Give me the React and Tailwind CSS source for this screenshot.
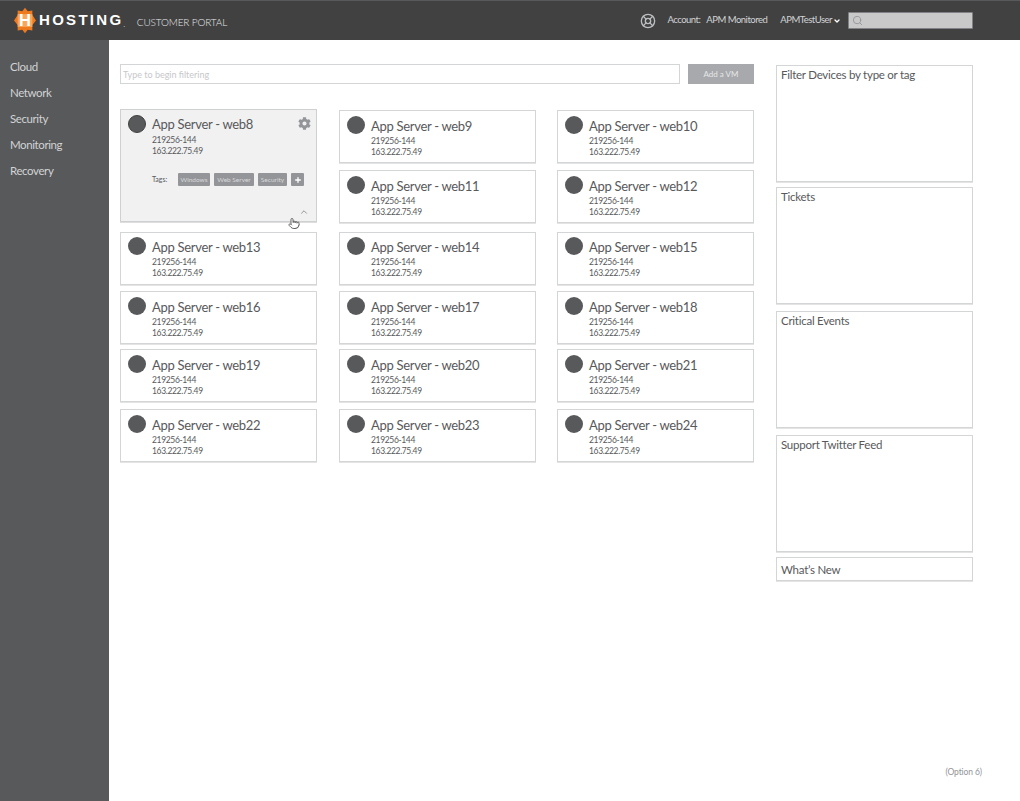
import { ChevronDown, ChevronUp, LifeBuoy, Plus, Pointer, Search } from "lucide-react";
import { FaCog } from "react-icons/fa";

const NAV = ["Cloud", "Network", "Security", "Monitoring", "Recovery"];

function Card({ name, className = "", top = "pt-[5px]" }) {
  return (
    <div className={"h-[53px] border border-[#d4d5d6] bg-white shadow-[0_1px_0_#e4e4e4] pl-[7px] flex gap-[6px] " + top + " " + className}>
      <div className="w-[18px] h-[18px] rounded-full bg-[#58595b] shrink-0" />
      <div className="text-[#58595b]">
        <div className="text-[13px] leading-[20px] tracking-[-0.3px]">App Server - {name}</div>
        <div className="text-[8.5px] leading-[11px] tracking-[-0.35px]">219256-144</div>
        <div className="text-[8.5px] leading-[11px] tracking-[-0.35px]">163.222.75.49</div>
      </div>
    </div>
  );
}

function Tag({ children, className = "" }) {
  return (
    <span className={"h-[13px] rounded-[1px] bg-[#939598] text-[#d8d9da] text-[6.5px] flex items-center justify-center " + className}>
      {children}
    </span>
  );
}

function OpenCard() {
  return (
    <div className="relative -mt-[1px] h-[113px] border border-[#cfd0d1] bg-[#f1f1f2] shadow-[0_1px_0_#dedede] pl-[7px] pt-[5px] text-[#58595b]">
      <div className="flex gap-[6px]">
        <div className="w-[18px] h-[18px] rounded-full bg-[#58595b] border border-[#414142] shrink-0" />
        <div className="flex-1">
          <div className="flex justify-between pr-[5px]">
            <div className="text-[13px] leading-[19px] tracking-[-0.3px]">App Server - web8</div>
            <FaCog className="w-[13px] h-[13px] mt-[2px] text-[#939598]" />
          </div>
          <div className="text-[8.5px] leading-[11px] tracking-[-0.35px] mt-[1px]">219256-144</div>
          <div className="text-[8.5px] leading-[11px] tracking-[-0.35px]">163.222.75.49</div>
          <div className="flex items-center mt-[16px]">
            <span className="text-[7px] w-[26px]">Tags:</span>
            <Tag className="w-[32px]">Windows</Tag>
            <Tag className="w-[40px] ml-[4px]">Web Server</Tag>
            <Tag className="w-[29px] ml-[4px]">Security</Tag>
            <Tag className="w-[13px] ml-[4px]">
              <Plus className="w-[8px] h-[8px] text-white" strokeWidth={4} />
            </Tag>
          </div>
        </div>
      </div>
      <ChevronUp className="absolute right-[7px] bottom-[4px] w-[10px] h-[10px] text-[#808285]" />
      <Pointer className="absolute left-[167px] top-[106px] w-[12px] h-[15px] fill-white text-[#414142]" strokeWidth={1.6} />
    </div>
  );
}

function SideBox({ title, className }) {
  return (
    <div className={"border border-[#d4d5d6] shadow-[0_1px_0_#e4e4e4] px-[4px] text-[11.5px] tracking-[-0.25px] leading-[18px] text-[#58595b] " + className}>
      {title}
    </div>
  );
}

export default function App() {
  return (
    <div className="w-[1020px] h-[801px] bg-white overflow-hidden flex flex-col font-['Lato','Open_Sans',sans-serif]">
      <header className="h-[40px] shrink-0 bg-[#414142] border-t border-[#58595b] flex items-center pl-[14px] pr-[47px] text-[#d1d3d4]">
        <svg width="22" height="27" viewBox="0 0 24 28" className="shrink-0 -mt-[1px]">
          <polygon
            points="12,0 15,4 20,3 20,8 24,14 20,19 20,25 15,24 12,28 9,24 4,25 4,19 0,14 4,8 4,3 9,4"
            fill="#ef7a1e"
          />
          <rect x="4" y="7" width="16" height="14" fill="#f9a65a" />
          <text x="12" y="20" textAnchor="middle" fontSize="18" fontWeight="900" fill="#fff" fontFamily="Liberation Sans">H</text>
        </svg>
        <span className="ml-[3px] text-white text-[15px] font-bold tracking-[2.3px] font-['Liberation_Sans',sans-serif]">HOSTING</span>
        <span className="text-white text-[6px] mt-[8px]">.</span>
        <span className="ml-[12px] mt-[3px] text-[10px] font-light tracking-[-0.15px] text-[#e6e7e8]">CUSTOMER PORTAL</span>
        <div className="ml-auto flex items-center text-[9.5px] tracking-[-0.5px]">
          <LifeBuoy className="w-[16px] h-[16px] text-[#bcbec0]" />
          <span className="ml-[11px]">Account:</span>
          <span className="ml-[6px]">APM Monitored</span>
          <span className="ml-[13px]">APMTestUser</span>
          <ChevronDown className="ml-[1px] w-[8px] h-[8px] text-white" strokeWidth={4} />
          <div className="ml-[7px] w-[125px] h-[17px] bg-[#c9c9ca] border border-[#808285] rounded-[1px] flex items-center pl-[3px]">
            <Search className="w-[11px] h-[11px] text-[#939598]" />
          </div>
        </div>
      </header>

      <div className="flex-1 flex">
        <nav className="w-[109px] shrink-0 bg-[#58595b] pt-[14px] pl-[10px] flex flex-col text-[11.5px] tracking-[-0.4px] text-[#d1d3d4]">
          {NAV.map((n) => (
            <div key={n} className="h-[26px] leading-[26px]">{n}</div>
          ))}
        </nav>

        <main className="relative flex-1 pl-[11px] pt-[24px] flex">
          <div className="w-[634px]">
            <div className="flex gap-[8px]">
              <div className="w-[560px] h-[20px] border border-[#d4d5d6] text-[9px] leading-[20px] pl-[2px] text-[#c7c8ca]">Type to begin filtering</div>
              <button className="w-[66px] h-[20px] bg-[#a7a9ac] text-[#e6e7e8] text-[8px]">Add a VM</button>
            </div>

            <div className="flex mt-[26px]">
              <div className="flex flex-col w-[197px]">
                <OpenCard />
                <Card name="web13" className="mt-[10px]" top="pt-[4px]" />
                <Card name="web16" className="mt-[6px]" />
                <Card name="web19" className="mt-[5px]" />
                <Card name="web22" className="mt-[7px]" />
              </div>
              <div className="flex flex-col w-[197px] ml-[22px]">
                <Card name="web9" />
                <Card name="web11" className="mt-[7px]" />
                <Card name="web14" className="mt-[9px]" top="pt-[4px]" />
                <Card name="web17" className="mt-[6px]" />
                <Card name="web20" className="mt-[5px]" />
                <Card name="web23" className="mt-[7px]" />
              </div>
              <div className="flex flex-col w-[197px] ml-[21px]">
                <Card name="web10" />
                <Card name="web12" className="mt-[7px]" />
                <Card name="web15" className="mt-[9px]" top="pt-[4px]" />
                <Card name="web18" className="mt-[6px]" />
                <Card name="web21" className="mt-[5px]" />
                <Card name="web24" className="mt-[7px]" />
              </div>
            </div>
          </div>

          <aside className="ml-[22px] w-[197px] mt-[1px]">
            <SideBox title="Filter Devices by type or tag" className="h-[117px]" />
            <SideBox title="Tickets" className="h-[117px] mt-[5px]" />
            <SideBox title="Critical Events" className="h-[117px] mt-[7px]" />
            <SideBox title="Support Twitter Feed" className="h-[117px] mt-[7px]" />
            <SideBox title="What’s New" className="h-[24px] mt-[5px] leading-[24px]" />
          </aside>

          <span className="absolute right-[38px] bottom-[22px] text-[8.5px] tracking-[-0.1px] text-[#939598]">(Option 6)</span>
        </main>
      </div>
    </div>
  );
}
